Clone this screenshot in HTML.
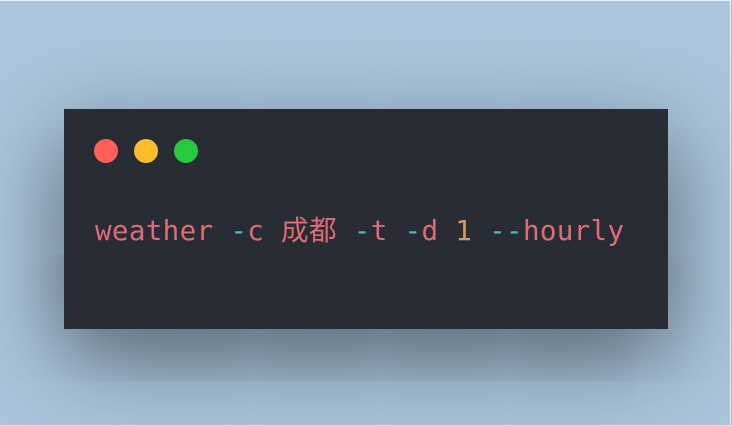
<!DOCTYPE html>
<html><head><meta charset="utf-8"><style>
html,body{margin:0;padding:0;width:732px;height:426px;overflow:hidden;background:#abc5dc;}
.bg{position:absolute;left:0;top:0;width:731px;height:425px;background:#abc5dc;border-top:1px solid #e8eef4;border-right:1px solid #e8eef4;box-sizing:border-box;}
.edge{position:absolute;left:0;top:425px;width:732px;height:1px;background:#e4e8ec;}
.card{position:absolute;left:64px;top:109px;width:604px;height:220px;background:#282c35;box-shadow:0 28px 90px rgba(0,0,0,0.55);}
.dot{position:absolute;top:30px;width:24px;height:24px;border-radius:50%;}
.t{position:absolute;left:31px;top:101px;font-family:"DejaVu Sans Mono","Noto Sans CJK SC",monospace;font-size:27.6px;letter-spacing:0.3px;white-space:pre;line-height:42px;color:#e06c75;}
.c{color:#56b6c2}.n{color:#d19a66}
</style></head><body>
<div class="bg"></div><div class="edge"></div>
<div class="card">
<div class="dot" style="left:30px;background:#ff5f56"></div>
<div class="dot" style="left:70px;background:#ffbd2e"></div>
<div class="dot" style="left:110px;background:#27c93f"></div>
<div class="t">weather <span class="c">-</span>c 成都 <span class="c">-</span>t <span class="c">-</span>d <span class="n">1</span> <span class="c">--</span>hourly</div>
</div>
</body></html>
